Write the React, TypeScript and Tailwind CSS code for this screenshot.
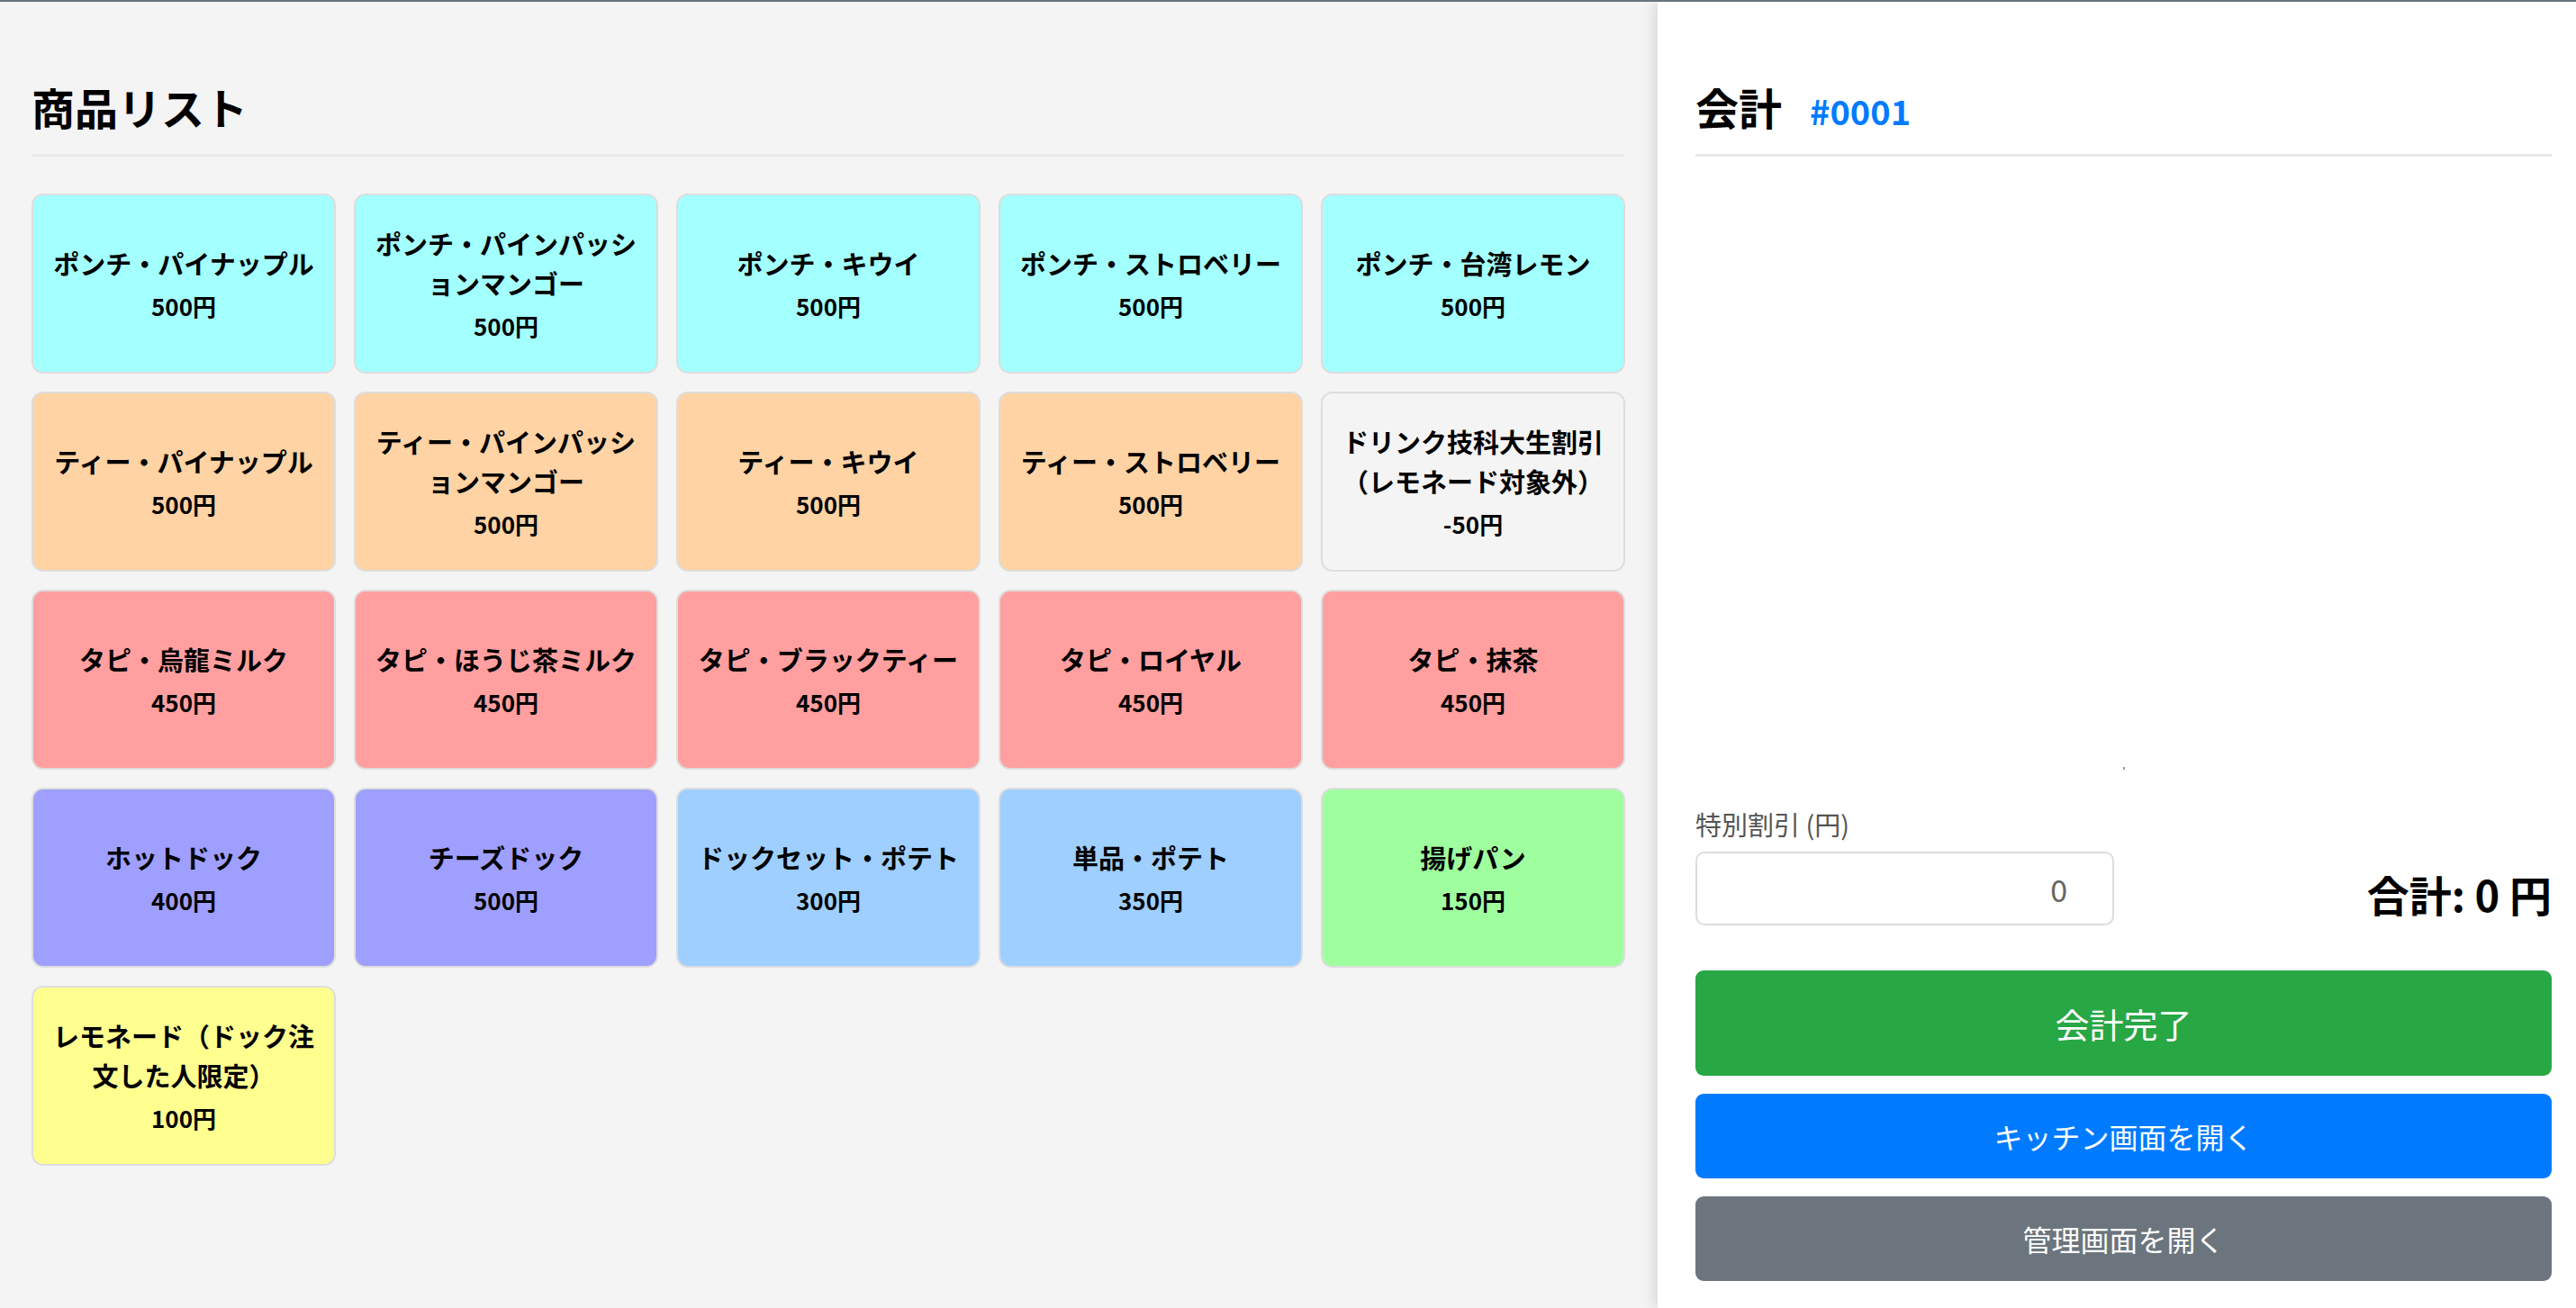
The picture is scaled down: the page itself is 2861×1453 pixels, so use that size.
import React from "react";

type Item = { name: string; price: string; bg: string };

const items: Item[] = [
  { name: "ポンチ・パイナップル", price: "500円", bg: "bg-[#a4ffff]" },
  { name: "ポンチ・パインパッションマンゴー", price: "500円", bg: "bg-[#a4ffff]" },
  { name: "ポンチ・キウイ", price: "500円", bg: "bg-[#a4ffff]" },
  { name: "ポンチ・ストロベリー", price: "500円", bg: "bg-[#a4ffff]" },
  { name: "ポンチ・台湾レモン", price: "500円", bg: "bg-[#a4ffff]" },
  { name: "ティー・パイナップル", price: "500円", bg: "bg-[#ffd3a4]" },
  { name: "ティー・パインパッションマンゴー", price: "500円", bg: "bg-[#ffd3a4]" },
  { name: "ティー・キウイ", price: "500円", bg: "bg-[#ffd3a4]" },
  { name: "ティー・ストロベリー", price: "500円", bg: "bg-[#ffd3a4]" },
  { name: "ドリンク技科大生割引（レモネード対象外）", price: "-50円", bg: "bg-[#f4f4f4]" },
  { name: "タピ・烏龍ミルク", price: "450円", bg: "bg-[#ff9f9f]" },
  { name: "タピ・ほうじ茶ミルク", price: "450円", bg: "bg-[#ff9f9f]" },
  { name: "タピ・ブラックティー", price: "450円", bg: "bg-[#ff9f9f]" },
  { name: "タピ・ロイヤル", price: "450円", bg: "bg-[#ff9f9f]" },
  { name: "タピ・抹茶", price: "450円", bg: "bg-[#ff9f9f]" },
  { name: "ホットドック", price: "400円", bg: "bg-[#9f9fff]" },
  { name: "チーズドック", price: "500円", bg: "bg-[#9f9fff]" },
  { name: "ドックセット・ポテト", price: "300円", bg: "bg-[#9fcfff]" },
  { name: "単品・ポテト", price: "350円", bg: "bg-[#9fcfff]" },
  { name: "揚げパン", price: "150円", bg: "bg-[#9fff9f]" },
  { name: "レモネード（ドック注文した人限定）", price: "100円", bg: "bg-[#ffff8f]" },
];

const font = { fontFamily: '"Noto Sans CJK JP", "Noto Sans", sans-serif' };

export default function App() {
  return (
    <div
      className="w-[2861px] h-[1453px] flex border-t-2 border-[#66767a] overflow-hidden text-black"
      style={font}
    >
      {/* Left panel */}
      <div className="w-[1841px] shrink-0 bg-[#f4f4f4] pl-[35px] pr-[37px]">
        <div className="pt-[87px] pb-[24px] border-b-[3px] border-[#e9e9e9] mb-[41px]">
          <h2 className="text-[48px] leading-[58px] font-bold">商品リスト</h2>
        </div>
        <div className="grid grid-cols-[repeat(5,338px)] gap-[20px]">
          {items.map((it, i) => (
            <div
              key={i}
              className={`${it.bg} h-[200px] rounded-[13px] border-2 border-[#dddddd] flex flex-col items-center justify-center px-[20px] text-center`}
            >
              <div className="text-[29px] leading-[44px] font-bold">{it.name}</div>
              <div className="text-[26px] leading-[40px] font-bold mt-[6px]">{it.price}</div>
            </div>
          ))}
        </div>
      </div>

      {/* Right panel */}
      <div className="flex-1 bg-white flex flex-col pl-[42px] pr-[27px] pb-[30px] shadow-[-6px_0_12px_rgba(0,0,0,0.09)] relative">
        <div className="pt-[87px] pb-[24px] border-b-[3px] border-[#e9e9e9] flex items-baseline gap-[31px]">
          <h2 className="text-[48px] leading-[58px] font-bold">会計</h2>
          <span className="text-[38px] leading-[38px] font-bold text-[#007bff]">#0001</span>
        </div>
        <div className="flex-1 flex flex-col justify-end items-center">
          <div className="w-[2px] h-[3px] bg-[#9a9a9a] mb-[40px]" />
        </div>
        <div className="text-[29px] leading-[40px] text-[#555555] mb-[11px]">特別割引 (円)</div>
        <div className="flex items-end justify-between">
          <input
            type="text"
            defaultValue="0"
            readOnly
            className="w-[465px] h-[82px] border-2 border-[#dddddd] rounded-[10px] text-right pr-[50px] text-[34px] text-[#666666] outline-none bg-white"
            style={font}
          />
          <div className="text-[47px] leading-[70px] font-bold">合計: 0 円</div>
        </div>
        <button
          className="mt-[50px] h-[117px] rounded-[9px] bg-[#28a745] text-white text-[38px]"
          style={font}
        >
          会計完了
        </button>
        <button
          className="mt-[20px] h-[94px] rounded-[9px] bg-[#007bff] text-white text-[32px]"
          style={font}
        >
          キッチン画面を開く
        </button>
        <button
          className="mt-[20px] h-[94px] rounded-[9px] bg-[#6c757d] text-white text-[32px]"
          style={font}
        >
          管理画面を開く
        </button>
      </div>
    </div>
  );
}
